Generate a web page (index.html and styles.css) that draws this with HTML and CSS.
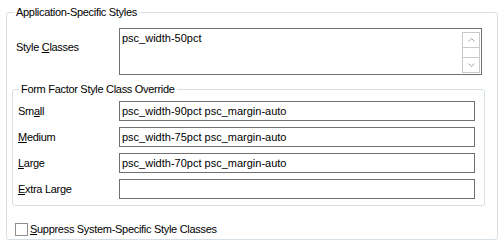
FILE: index.html
```html
<!DOCTYPE html>
<html lang="en">
<head>
    <meta charset="UTF-8">
    <title>Application-Specific Styles</title>
    <link rel="stylesheet" href="styles.css">
</head>
<body>
    <div class="grupo externo">
        <span class="titulo">Application-Specific Styles</span>

        <div class="fila-clases">
            <label class="etiqueta-clases">Style <u>C</u>lasses</label>
            <div class="area">
                psc_width-50pct
                <div class="barra">
                    <div class="boton arriba">
                        <svg width="7" height="4" viewBox="0 0 7 4"><polyline points="0.5,3.5 3.5,0.5 6.5,3.5" fill="none" stroke="#a2a2a2" stroke-width="1"/></svg>
                    </div>
                    <div class="pista"></div>
                    <div class="boton abajo">
                        <svg width="7" height="4" viewBox="0 0 7 4"><polyline points="0.5,0.5 3.5,3.5 6.5,0.5" fill="none" stroke="#a2a2a2" stroke-width="1"/></svg>
                    </div>
                </div>
            </div>
        </div>

        <div class="grupo interno">
            <span class="titulo">Form Factor Style Class Override</span>
            <div class="fila">
                <label>Sm<u>a</u>ll</label>
                <div class="caja">psc_width-90pct psc_margin-auto</div>
            </div>
            <div class="fila">
                <label><u>M</u>edium</label>
                <div class="caja">psc_width-75pct psc_margin-auto</div>
            </div>
            <div class="fila">
                <label><u>L</u>arge</label>
                <div class="caja">psc_width-70pct psc_margin-auto</div>
            </div>
            <div class="fila">
                <label><u>E</u>xtra Large</label>
                <div class="caja"></div>
            </div>
        </div>

        <label class="casilla">
            <span class="cuadro"></span>
            <span><u>S</u>uppress System-Specific Style Classes</span>
        </label>
    </div>
</body>
</html>
```

FILE: styles.css
```css
* {
    margin: 0;
    padding: 0;
    box-sizing: border-box;
}

:root {
    --linea-grupo: #d5dfe5;
    --borde-caja: #707070;
    --borde-barra: #c9c9c9;
    --texto: #000;
}

body {
    background: #fff;
    color: var(--texto);
    font-family: "Liberation Sans", Arial, sans-serif;
    font-size: 11px;
    line-height: 13px;
    letter-spacing: -0.3px;
}

u {
    text-decoration: underline;
    text-underline-offset: 1px;
}

/* Marcos de grupo */
.grupo {
    position: relative;
    border: 1px solid var(--linea-grupo);
    border-radius: 3px;
}

.titulo {
    position: absolute;
    top: -7px;
    left: 6px;
    padding: 0 2px;
    background: #fff;
    white-space: nowrap;
}

.externo {
    margin: 12px 6px 0 6px;
    padding: 15px 0 3px 5px;
}

.externo > .titulo {
    left: 7px;
}

/* Clases de estilo */
.fila-clases {
    display: grid;
    grid-template-columns: 103px 1fr;
    margin-right: 15px;
    padding-left: 4px;
}

.etiqueta-clases {
    padding-top: 13px;
}

.area {
    position: relative;
    height: 47px;
    border: 1px solid var(--borde-caja);
    padding: 3px 22px 0 2px;
    white-space: nowrap;
    letter-spacing: 0;
}

.barra {
    position: absolute;
    top: 3px;
    right: 1px;
    bottom: 1px;
    width: 18px;
    display: flex;
    flex-direction: column;
    border: 1px solid var(--borde-barra);
}

.boton {
    height: 15px;
    display: flex;
    align-items: center;
    justify-content: center;
}

.arriba {
    border-bottom: 1px solid var(--borde-barra);
}

.pista {
    flex: 1;
}

.abajo {
    border-top: 1px solid var(--borde-barra);
}

/* Grupo interno */
.interno {
    margin: 14px 12px 0 0;
    padding: 11px 9px 6px 5px;
    display: flex;
    flex-direction: column;
    gap: 6px;
}

.fila {
    display: grid;
    grid-template-columns: 101px 1fr;
    align-items: center;
}

.fila label {
    padding-top: 1px;
}

.caja {
    height: 20px;
    border: 1px solid var(--borde-caja);
    padding: 0 2px;
    display: flex;
    align-items: center;
    white-space: nowrap;
    letter-spacing: 0;
}

/* Casilla inferior */
.casilla {
    display: flex;
    align-items: center;
    gap: 2px;
    margin: 17px 0 0 3px;
    height: 13px;
}

.cuadro {
    width: 13px;
    height: 13px;
    border: 1px solid #8e8f8f;
    background: #fff;
}
```
